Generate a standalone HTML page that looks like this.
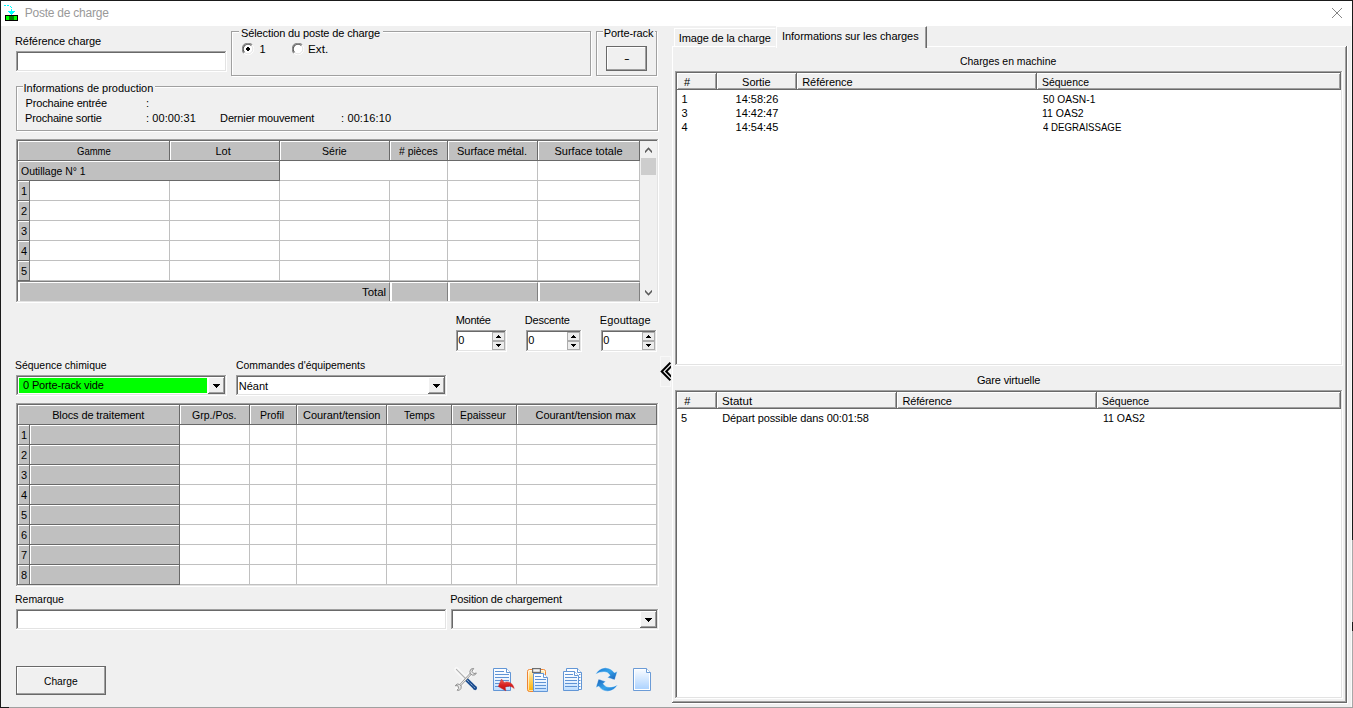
<!DOCTYPE html>
<html lang="fr"><head><meta charset="utf-8"><title>Poste de charge</title>
<style>
*{box-sizing:border-box;margin:0;padding:0}
html,body{width:1353px;height:708px;overflow:hidden;background:#f0f0f0}
body{position:relative;font:11px/13px "Liberation Sans",sans-serif;color:#000}
.a{position:absolute}
.t{position:absolute;white-space:pre;font:11px/13px "Liberation Sans",sans-serif}
.sunk{position:absolute;background:#fff;box-shadow:inset -1px -1px 0 #fff,inset 1px 1px 0 #a0a0a0,inset -2px -2px 0 #e3e3e3,inset 2px 2px 0 #696969}
.gb{position:absolute;border:1px solid #a0a0a0;box-shadow:1px 1px 0 #fff,inset 1px 1px 0 #fff}
.cov{position:absolute;background:#f0f0f0}
.btn{position:absolute;background:#f0f0f0;box-shadow:inset -1px -1px 0 #696969,inset 1px 1px 0 #fff,inset -2px -2px 0 #a0a0a0}
.pb{position:absolute;background:#f0f0f0;box-shadow:inset 0 0 0 1px #696969,inset -2px -2px 0 #a0a0a0,inset 2px 2px 0 #fff}
.fb{position:absolute;border:1px solid #adadad;background:#ececec}
.hc{position:absolute;background:#c0c0c0;box-shadow:inset -1px -1px 0 #696969,inset 1px 1px 0 #fff}
.dc{position:absolute;background:#fff;border-right:1px solid #c0c0c0;border-bottom:1px solid #c0c0c0}
.lh{position:absolute;background:#f0f0f0;box-shadow:inset -1px -1px 0 #696969,inset 1px 1px 0 #fff,inset -2px -2px 0 #a0a0a0}
</style></head>
<body>
<div class="a" style="left:0px;top:0px;width:1353px;height:26px;background:#fff"></div>
<div class="a" style="left:0px;top:0px;width:1353px;height:1px;background:#1a1a1a"></div>
<div class="a" style="left:0px;top:0px;width:1px;height:708px;background:#1a1a1a"></div>
<div class="a" style="left:1352px;top:0px;width:1px;height:540px;background:#1a1a1a"></div>
<div class="a" style="left:1352px;top:540px;width:1px;height:168px;background:#a8a8a8"></div>
<div class="a" style="left:1352px;top:622px;width:1px;height:9px;background:#1a1a1a"></div>
<div class="a" style="left:1351px;top:26px;width:1px;height:681px;background:#fafafa"></div>
<div class="a" style="left:0px;top:707px;width:1353px;height:1px;background:#a0a0a0"></div>
<div class="a" style="left:0px;top:707px;width:9px;height:1px;background:#1a1a1a"></div>
<svg class="a" style="left:0;top:0" width="24" height="24" viewBox="0 0 24 24" shape-rendering="crispEdges">
<path d="M4 5h2v1h-2zM7 5h2v1h-2zM10 6h1v1h-1zM11 7h1v1h-1zM11 9h1v2h-1zM8 11h7v1h-7zM9 12h5v1h-5zM10 13h3v1h-3zM11 14h1v1h-1z" fill="#00ffff"/>
<rect x="5" y="15" width="13" height="6" fill="#000"/>
<rect x="6" y="16" width="11" height="4" fill="#00ff00"/>
<rect x="9" y="16" width="5" height="4" fill="#008000"/>
</svg>

<div class="t" style="top:6px;left:24.70px;letter-spacing:-0.229px;font-size:12px;line-height:15px;color:#999;">Poste de charge</div>
<svg class="a" style="left:1331px;top:7px" width="12" height="12" viewBox="0 0 12 12"><path d="M1 1l10 10M11 1L1 11" stroke="#858585" stroke-width="1" fill="none"/></svg>
<div class="t" style="top:35px;left:15.00px;letter-spacing:-0.087px;">Référence charge</div>
<div class="sunk" style="left:16px;top:51px;width:211px;height:21px;"></div>
<div class="gb" style="left:231px;top:31px;width:360px;height:45px;"></div>
<div class="cov" style="left:239px;top:31px;width:144px;height:2px;"></div>
<div class="t" style="top:27px;left:241.05px;letter-spacing:-0.124px;">Sélection du poste de charge</div>
<svg class="a" style="left:242px;top:43px" width="12" height="12" viewBox="0 0 12 12">
<circle cx="6" cy="6" r="5.5" fill="#fff"/>
<path d="M1.9 10.1A5.5 5.5 0 0 1 10.1 1.9" stroke="#8c8c8c" stroke-width="1.1" fill="none"/>
<path d="M2.6 9.4A4.5 4.5 0 0 1 9.4 2.6" stroke="#5a5a5a" stroke-width="1.1" fill="none"/>
<path d="M10.1 1.9A5.5 5.5 0 0 1 1.9 10.1" stroke="#fff" stroke-width="1" fill="none"/>
<path d="M9.4 2.6A4.5 4.5 0 0 1 2.6 9.4" stroke="#e3e3e3" stroke-width="1" fill="none"/>
<path d="M5 4h2v1h1v2h-1v1h-2v-1h-1v-2h1z" fill="#000"/></svg>
<div class="t" style="top:43px;left:259.40px;">1</div>
<svg class="a" style="left:292px;top:43px" width="12" height="12" viewBox="0 0 12 12">
<circle cx="6" cy="6" r="5.5" fill="#fff"/>
<path d="M1.9 10.1A5.5 5.5 0 0 1 10.1 1.9" stroke="#8c8c8c" stroke-width="1.1" fill="none"/>
<path d="M2.6 9.4A4.5 4.5 0 0 1 9.4 2.6" stroke="#5a5a5a" stroke-width="1.1" fill="none"/>
<path d="M10.1 1.9A5.5 5.5 0 0 1 1.9 10.1" stroke="#fff" stroke-width="1" fill="none"/>
<path d="M9.4 2.6A4.5 4.5 0 0 1 2.6 9.4" stroke="#e3e3e3" stroke-width="1" fill="none"/>
</svg>
<div class="t" style="top:43px;left:307.89px;transform:scaleX(1.0647);transform-origin:0 0;">Ext.</div>
<div class="gb" style="left:596px;top:31px;width:61px;height:45px;"></div>
<div class="cov" style="left:603px;top:31px;width:52px;height:2px;"></div>
<div class="t" style="top:27px;left:603.75px;letter-spacing:-0.117px;">Porte-rack</div>
<div class="pb" style="left:606px;top:46px;width:41px;height:25px;"></div>
<div class="t" style="left:624.3px;top:52px;transform:scaleX(1.55);transform-origin:0 0">-</div>
<div class="gb" style="left:16px;top:86px;width:642px;height:45px;"></div>
<div class="cov" style="left:23px;top:86px;width:132px;height:2px;"></div>
<div class="t" style="top:82px;left:23.50px;letter-spacing:-0.016px;">Informations de production</div>
<div class="t" style="top:97px;left:25.60px;letter-spacing:-0.153px;">Prochaine entrée</div>
<div class="t" style="left:146px;top:97px;">:</div>
<div class="t" style="top:112px;left:25.10px;letter-spacing:-0.187px;">Prochaine sortie</div>
<div class="t" style="top:112px;left:145.90px;letter-spacing:0.111px;">: 00:00:31</div>
<div class="t" style="top:112px;left:220.10px;letter-spacing:-0.150px;">Dernier mouvement</div>
<div class="t" style="top:112px;left:341.05px;letter-spacing:0.117px;">: 00:16:10</div>
<div class="sunk" style="left:16px;top:139px;width:643px;height:164px;"></div>
<div class="hc" style="left:18px;top:141px;width:152px;height:20px;"></div>
<div class="t" style="top:145px;left:76.85px;transform:scaleX(0.8641);transform-origin:0 0;">Gamme</div>
<div class="hc" style="left:170px;top:141px;width:110px;height:20px;"></div>
<div class="t" style="top:145px;left:215.45px;letter-spacing:0.025px;">Lot</div>
<div class="hc" style="left:280px;top:141px;width:110px;height:20px;"></div>
<div class="t" style="top:145px;left:321.99px;transform:scaleX(0.9583);transform-origin:0 0;">Série</div>
<div class="hc" style="left:390px;top:141px;width:58px;height:20px;"></div>
<div class="t" style="top:145px;left:398.95px;transform:scaleX(0.9463);transform-origin:0 0;"># pièces</div>
<div class="hc" style="left:448px;top:141px;width:90px;height:20px;"></div>
<div class="t" style="top:145px;left:457.10px;letter-spacing:-0.077px;">Surface métal.</div>
<div class="hc" style="left:538px;top:141px;width:102px;height:20px;"></div>
<div class="t" style="top:145px;left:554.40px;letter-spacing:0.023px;">Surface totale</div>
<div class="hc" style="left:18px;top:161px;width:262px;height:20px;"></div>
<div class="t" style="top:165px;left:21.25px;transform:scaleX(0.9515);transform-origin:0 0;">Outillage N° 1</div>
<div class="dc" style="left:280px;top:161px;width:168px;height:20px;"></div>
<div class="dc" style="left:448px;top:161px;width:90px;height:20px;"></div>
<div class="dc" style="left:538px;top:161px;width:102px;height:20px;"></div>
<div class="hc" style="left:18px;top:181px;width:12px;height:20px;"></div>
<div class="t" style="left:21px;top:185px;">1</div>
<div class="dc" style="left:30px;top:181px;width:140px;height:20px;"></div>
<div class="dc" style="left:170px;top:181px;width:110px;height:20px;"></div>
<div class="dc" style="left:280px;top:181px;width:110px;height:20px;"></div>
<div class="dc" style="left:390px;top:181px;width:58px;height:20px;"></div>
<div class="dc" style="left:448px;top:181px;width:90px;height:20px;"></div>
<div class="dc" style="left:538px;top:181px;width:102px;height:20px;"></div>
<div class="hc" style="left:18px;top:201px;width:12px;height:20px;"></div>
<div class="t" style="left:21px;top:205px;">2</div>
<div class="dc" style="left:30px;top:201px;width:140px;height:20px;"></div>
<div class="dc" style="left:170px;top:201px;width:110px;height:20px;"></div>
<div class="dc" style="left:280px;top:201px;width:110px;height:20px;"></div>
<div class="dc" style="left:390px;top:201px;width:58px;height:20px;"></div>
<div class="dc" style="left:448px;top:201px;width:90px;height:20px;"></div>
<div class="dc" style="left:538px;top:201px;width:102px;height:20px;"></div>
<div class="hc" style="left:18px;top:221px;width:12px;height:20px;"></div>
<div class="t" style="left:21px;top:225px;">3</div>
<div class="dc" style="left:30px;top:221px;width:140px;height:20px;"></div>
<div class="dc" style="left:170px;top:221px;width:110px;height:20px;"></div>
<div class="dc" style="left:280px;top:221px;width:110px;height:20px;"></div>
<div class="dc" style="left:390px;top:221px;width:58px;height:20px;"></div>
<div class="dc" style="left:448px;top:221px;width:90px;height:20px;"></div>
<div class="dc" style="left:538px;top:221px;width:102px;height:20px;"></div>
<div class="hc" style="left:18px;top:241px;width:12px;height:20px;"></div>
<div class="t" style="left:21px;top:245px;">4</div>
<div class="dc" style="left:30px;top:241px;width:140px;height:20px;"></div>
<div class="dc" style="left:170px;top:241px;width:110px;height:20px;"></div>
<div class="dc" style="left:280px;top:241px;width:110px;height:20px;"></div>
<div class="dc" style="left:390px;top:241px;width:58px;height:20px;"></div>
<div class="dc" style="left:448px;top:241px;width:90px;height:20px;"></div>
<div class="dc" style="left:538px;top:241px;width:102px;height:20px;"></div>
<div class="hc" style="left:18px;top:261px;width:12px;height:20px;"></div>
<div class="t" style="left:21px;top:265px;">5</div>
<div class="dc" style="left:30px;top:261px;width:140px;height:20px;"></div>
<div class="dc" style="left:170px;top:261px;width:110px;height:20px;"></div>
<div class="dc" style="left:280px;top:261px;width:110px;height:20px;"></div>
<div class="dc" style="left:390px;top:261px;width:58px;height:20px;"></div>
<div class="dc" style="left:448px;top:261px;width:90px;height:20px;"></div>
<div class="dc" style="left:538px;top:261px;width:102px;height:20px;"></div>
<div class="a" style="left:18px;top:281px;width:622px;height:1px;background:#808080"></div>
<div class="a" style="left:18px;top:282px;width:372px;height:19px;background:#c0c0c0;border-top:1px solid #fff;border-left:2px solid #fff;border-right:1px solid #808080"></div>
<div class="a" style="left:390px;top:282px;width:58px;height:19px;background:#c0c0c0;border-top:1px solid #fff;border-left:2px solid #fff;border-right:1px solid #808080"></div>
<div class="a" style="left:448px;top:282px;width:90px;height:19px;background:#c0c0c0;border-top:1px solid #fff;border-left:2px solid #fff;border-right:1px solid #808080"></div>
<div class="a" style="left:538px;top:282px;width:102px;height:19px;background:#c0c0c0;border-top:1px solid #fff;border-left:2px solid #fff;border-right:1px solid #808080"></div>
<div class="t" style="top:286px;left:362.25px;transform:scaleX(1.0391);transform-origin:0 0;">Total</div>
<div class="a" style="left:640px;top:141px;width:17px;height:160px;background:#f0f0f0"></div>
<div class="a" style="left:641px;top:158px;width:15px;height:17px;background:#cdcdcd"></div>
<svg class="a" style="left:640px;top:141px" width="17" height="160" viewBox="640 141 17 160"><path d="M645 153.2L648.5 149.4L652 153.2V151L648.5 147.2L645 151ZM645 289.8L648.5 293.6L652 289.8V292L648.5 295.8L645 292Z" fill="#5a5a5a"/></svg>
<div class="t" style="top:314px;left:455.70px;letter-spacing:-0.280px;">Montée</div>
<div class="sunk" style="left:456px;top:330px;width:51px;height:22px;"></div>
<div class="t" style="top:334px;left:458.25px;">0</div>
<div class="fb" style="left:492px;top:332px;width:13px;height:9px;"></div>
<div class="fb" style="left:492px;top:341px;width:13px;height:9px;"></div>
<div class="a" style="left:498px;top:335px;width:1px;height:1px;background:#000"></div><div class="a" style="left:497px;top:336px;width:3px;height:1px;background:#000"></div><div class="a" style="left:496px;top:337px;width:5px;height:1px;background:#000"></div>
<div class="a" style="left:496px;top:344px;width:5px;height:1px;background:#000"></div><div class="a" style="left:497px;top:345px;width:3px;height:1px;background:#000"></div><div class="a" style="left:498px;top:346px;width:1px;height:1px;background:#000"></div>
<div class="t" style="top:314px;left:524.80px;letter-spacing:-0.186px;">Descente</div>
<div class="sunk" style="left:526px;top:330px;width:56px;height:22px;"></div>
<div class="t" style="top:334px;left:528.25px;">0</div>
<div class="fb" style="left:567px;top:332px;width:13px;height:9px;"></div>
<div class="fb" style="left:567px;top:341px;width:13px;height:9px;"></div>
<div class="a" style="left:573px;top:335px;width:1px;height:1px;background:#000"></div><div class="a" style="left:572px;top:336px;width:3px;height:1px;background:#000"></div><div class="a" style="left:571px;top:337px;width:5px;height:1px;background:#000"></div>
<div class="a" style="left:571px;top:344px;width:5px;height:1px;background:#000"></div><div class="a" style="left:572px;top:345px;width:3px;height:1px;background:#000"></div><div class="a" style="left:573px;top:346px;width:1px;height:1px;background:#000"></div>
<div class="t" style="top:314px;left:599.80px;letter-spacing:0.087px;">Egouttage</div>
<div class="sunk" style="left:601px;top:330px;width:56px;height:22px;"></div>
<div class="t" style="top:334px;left:603.25px;">0</div>
<div class="fb" style="left:642px;top:332px;width:13px;height:9px;"></div>
<div class="fb" style="left:642px;top:341px;width:13px;height:9px;"></div>
<div class="a" style="left:648px;top:335px;width:1px;height:1px;background:#000"></div><div class="a" style="left:647px;top:336px;width:3px;height:1px;background:#000"></div><div class="a" style="left:646px;top:337px;width:5px;height:1px;background:#000"></div>
<div class="a" style="left:646px;top:344px;width:5px;height:1px;background:#000"></div><div class="a" style="left:647px;top:345px;width:3px;height:1px;background:#000"></div><div class="a" style="left:648px;top:346px;width:1px;height:1px;background:#000"></div>
<div class="t" style="top:359px;left:15.00px;transform:scaleX(0.9474);transform-origin:0 0;">Séquence chimique</div>
<div class="sunk" style="left:16px;top:375px;width:211px;height:21px;"></div>
<div class="a" style="left:19px;top:378px;width:188px;height:15px;background:#00ff00"></div>
<div class="btn" style="left:208px;top:377px;width:17px;height:17px;"></div>
<div class="a" style="left:213px;top:384px;width:7px;height:1px;background:#000"></div><div class="a" style="left:214px;top:385px;width:5px;height:1px;background:#000"></div><div class="a" style="left:215px;top:386px;width:3px;height:1px;background:#000"></div><div class="a" style="left:216px;top:387px;width:1px;height:1px;background:#000"></div>
<div class="t" style="top:379px;left:23.00px;letter-spacing:-0.144px;">0 Porte-rack vide</div>
<div class="t" style="top:359px;left:236.25px;transform:scaleX(0.9456);transform-origin:0 0;">Commandes d'équipements</div>
<div class="sunk" style="left:236px;top:375px;width:211px;height:21px;"></div>
<div class="btn" style="left:428px;top:377px;width:17px;height:17px;"></div>
<div class="a" style="left:433px;top:384px;width:7px;height:1px;background:#000"></div><div class="a" style="left:434px;top:385px;width:5px;height:1px;background:#000"></div><div class="a" style="left:435px;top:386px;width:3px;height:1px;background:#000"></div><div class="a" style="left:436px;top:387px;width:1px;height:1px;background:#000"></div>
<div class="t" style="top:380px;left:238.80px;letter-spacing:-0.025px;">Néant</div>
<div class="sunk" style="left:16px;top:403px;width:643px;height:184px;"></div>
<div class="hc" style="left:18px;top:405px;width:162px;height:20px;"></div>
<div class="t" style="top:409px;left:52.15px;letter-spacing:-0.114px;">Blocs de traitement</div>
<div class="hc" style="left:180px;top:405px;width:70px;height:20px;"></div>
<div class="t" style="top:409px;left:192.05px;transform:scaleX(0.9587);transform-origin:0 0;">Grp./Pos.</div>
<div class="hc" style="left:250px;top:405px;width:47px;height:20px;"></div>
<div class="t" style="top:409px;left:259.79px;transform:scaleX(0.9625);transform-origin:0 0;">Profil</div>
<div class="hc" style="left:297px;top:405px;width:90px;height:20px;"></div>
<div class="t" style="top:409px;left:303.00px;letter-spacing:-0.021px;">Courant/tension</div>
<div class="hc" style="left:387px;top:405px;width:65px;height:20px;"></div>
<div class="t" style="top:409px;left:403.65px;transform:scaleX(0.9469);transform-origin:0 0;">Temps</div>
<div class="hc" style="left:452px;top:405px;width:65px;height:20px;"></div>
<div class="t" style="top:409px;left:459.71px;transform:scaleX(0.9396);transform-origin:0 0;">Epaisseur</div>
<div class="hc" style="left:517px;top:405px;width:140px;height:20px;"></div>
<div class="t" style="top:409px;left:535.50px;letter-spacing:-0.067px;">Courant/tension max</div>
<div class="hc" style="left:18px;top:425px;width:12px;height:20px;"></div>
<div class="t" style="left:21px;top:429px;">1</div>
<div class="hc" style="left:30px;top:425px;width:150px;height:20px;"></div>
<div class="dc" style="left:180px;top:425px;width:70px;height:20px;"></div>
<div class="dc" style="left:250px;top:425px;width:47px;height:20px;"></div>
<div class="dc" style="left:297px;top:425px;width:90px;height:20px;"></div>
<div class="dc" style="left:387px;top:425px;width:65px;height:20px;"></div>
<div class="dc" style="left:452px;top:425px;width:65px;height:20px;"></div>
<div class="dc" style="left:517px;top:425px;width:140px;height:20px;"></div>
<div class="hc" style="left:18px;top:445px;width:12px;height:20px;"></div>
<div class="t" style="left:21px;top:449px;">2</div>
<div class="hc" style="left:30px;top:445px;width:150px;height:20px;"></div>
<div class="dc" style="left:180px;top:445px;width:70px;height:20px;"></div>
<div class="dc" style="left:250px;top:445px;width:47px;height:20px;"></div>
<div class="dc" style="left:297px;top:445px;width:90px;height:20px;"></div>
<div class="dc" style="left:387px;top:445px;width:65px;height:20px;"></div>
<div class="dc" style="left:452px;top:445px;width:65px;height:20px;"></div>
<div class="dc" style="left:517px;top:445px;width:140px;height:20px;"></div>
<div class="hc" style="left:18px;top:465px;width:12px;height:20px;"></div>
<div class="t" style="left:21px;top:469px;">3</div>
<div class="hc" style="left:30px;top:465px;width:150px;height:20px;"></div>
<div class="dc" style="left:180px;top:465px;width:70px;height:20px;"></div>
<div class="dc" style="left:250px;top:465px;width:47px;height:20px;"></div>
<div class="dc" style="left:297px;top:465px;width:90px;height:20px;"></div>
<div class="dc" style="left:387px;top:465px;width:65px;height:20px;"></div>
<div class="dc" style="left:452px;top:465px;width:65px;height:20px;"></div>
<div class="dc" style="left:517px;top:465px;width:140px;height:20px;"></div>
<div class="hc" style="left:18px;top:485px;width:12px;height:20px;"></div>
<div class="t" style="left:21px;top:489px;">4</div>
<div class="hc" style="left:30px;top:485px;width:150px;height:20px;"></div>
<div class="dc" style="left:180px;top:485px;width:70px;height:20px;"></div>
<div class="dc" style="left:250px;top:485px;width:47px;height:20px;"></div>
<div class="dc" style="left:297px;top:485px;width:90px;height:20px;"></div>
<div class="dc" style="left:387px;top:485px;width:65px;height:20px;"></div>
<div class="dc" style="left:452px;top:485px;width:65px;height:20px;"></div>
<div class="dc" style="left:517px;top:485px;width:140px;height:20px;"></div>
<div class="hc" style="left:18px;top:505px;width:12px;height:20px;"></div>
<div class="t" style="left:21px;top:509px;">5</div>
<div class="hc" style="left:30px;top:505px;width:150px;height:20px;"></div>
<div class="dc" style="left:180px;top:505px;width:70px;height:20px;"></div>
<div class="dc" style="left:250px;top:505px;width:47px;height:20px;"></div>
<div class="dc" style="left:297px;top:505px;width:90px;height:20px;"></div>
<div class="dc" style="left:387px;top:505px;width:65px;height:20px;"></div>
<div class="dc" style="left:452px;top:505px;width:65px;height:20px;"></div>
<div class="dc" style="left:517px;top:505px;width:140px;height:20px;"></div>
<div class="hc" style="left:18px;top:525px;width:12px;height:20px;"></div>
<div class="t" style="left:21px;top:529px;">6</div>
<div class="hc" style="left:30px;top:525px;width:150px;height:20px;"></div>
<div class="dc" style="left:180px;top:525px;width:70px;height:20px;"></div>
<div class="dc" style="left:250px;top:525px;width:47px;height:20px;"></div>
<div class="dc" style="left:297px;top:525px;width:90px;height:20px;"></div>
<div class="dc" style="left:387px;top:525px;width:65px;height:20px;"></div>
<div class="dc" style="left:452px;top:525px;width:65px;height:20px;"></div>
<div class="dc" style="left:517px;top:525px;width:140px;height:20px;"></div>
<div class="hc" style="left:18px;top:545px;width:12px;height:20px;"></div>
<div class="t" style="left:21px;top:549px;">7</div>
<div class="hc" style="left:30px;top:545px;width:150px;height:20px;"></div>
<div class="dc" style="left:180px;top:545px;width:70px;height:20px;"></div>
<div class="dc" style="left:250px;top:545px;width:47px;height:20px;"></div>
<div class="dc" style="left:297px;top:545px;width:90px;height:20px;"></div>
<div class="dc" style="left:387px;top:545px;width:65px;height:20px;"></div>
<div class="dc" style="left:452px;top:545px;width:65px;height:20px;"></div>
<div class="dc" style="left:517px;top:545px;width:140px;height:20px;"></div>
<div class="hc" style="left:18px;top:565px;width:12px;height:20px;"></div>
<div class="t" style="left:21px;top:569px;">8</div>
<div class="hc" style="left:30px;top:565px;width:150px;height:20px;"></div>
<div class="dc" style="left:180px;top:565px;width:70px;height:20px;"></div>
<div class="dc" style="left:250px;top:565px;width:47px;height:20px;"></div>
<div class="dc" style="left:297px;top:565px;width:90px;height:20px;"></div>
<div class="dc" style="left:387px;top:565px;width:65px;height:20px;"></div>
<div class="dc" style="left:452px;top:565px;width:65px;height:20px;"></div>
<div class="dc" style="left:517px;top:565px;width:140px;height:20px;"></div>
<div class="t" style="top:593px;left:15.10px;transform:scaleX(0.9520);transform-origin:0 0;">Remarque</div>
<div class="sunk" style="left:16px;top:609px;width:431px;height:21px;"></div>
<div class="t" style="top:593px;left:450.20px;letter-spacing:-0.176px;">Position de chargement</div>
<div class="sunk" style="left:451px;top:609px;width:208px;height:21px;"></div>
<div class="btn" style="left:640px;top:611px;width:17px;height:17px;"></div>
<div class="a" style="left:645px;top:618px;width:7px;height:1px;background:#000"></div><div class="a" style="left:646px;top:619px;width:5px;height:1px;background:#000"></div><div class="a" style="left:647px;top:620px;width:3px;height:1px;background:#000"></div><div class="a" style="left:648px;top:621px;width:1px;height:1px;background:#000"></div>
<div class="pb" style="left:16px;top:666px;width:90px;height:29px;"></div>
<div class="t" style="top:675px;left:44.05px;transform:scaleX(0.9306);transform-origin:0 0;">Charge</div>
<svg class="a" style="left:448px;top:662px" width="212" height="36" viewBox="448 662 212 36">
<defs>
<linearGradient id="gp" x1="0" y1="0" x2="0" y2="1"><stop offset="0" stop-color="#ffffff"/><stop offset="0.45" stop-color="#eef6ff"/><stop offset="1" stop-color="#b9dbff"/></linearGradient>
<linearGradient id="gn" x1="0" y1="0" x2="0" y2="1"><stop offset="0" stop-color="#f6faff"/><stop offset="1" stop-color="#add3ff"/></linearGradient>
<linearGradient id="gc" x1="0" y1="0" x2="0" y2="1"><stop offset="0" stop-color="#fff3cf"/><stop offset="0.35" stop-color="#ffd876"/><stop offset="1" stop-color="#ffb000"/></linearGradient>
<linearGradient id="gr" x1="0" y1="0" x2="0" y2="1"><stop offset="0" stop-color="#f06a60"/><stop offset="0.5" stop-color="#d82222"/><stop offset="1" stop-color="#c01010"/></linearGradient>
<linearGradient id="gb" x1="0" y1="0" x2="1" y2="1"><stop offset="0" stop-color="#1a73d0"/><stop offset="0.45" stop-color="#36a3ea"/><stop offset="1" stop-color="#175fb8"/></linearGradient>
</defs>
<!-- 1: tools -->
<g fill="none" stroke-linecap="round">
<path d="M456.5 669.5L475 688M457.5 688.5L472.5 671.5" stroke="#fff" stroke-width="5" opacity=".5"/>
<path d="M456.4 669.4L465.5 678.5" stroke="#b0b0b0" stroke-width="1.1"/>
<path d="M466.3 679.3L475.2 688.2" stroke="#1d4f91" stroke-width="3.8" stroke-linecap="butt"/>
<path d="M474.8 687.8L475.2 688.2" stroke="#1d4f91" stroke-width="3.8"/>
<path d="M467 680L474.6 687.6" stroke="#e8f0ff" stroke-width="0.9" stroke-dasharray="0.9 1.1" stroke-linecap="butt"/>
<path d="M459.5 686L470.5 674" stroke="#9a9a9a" stroke-width="2.4"/>
<path d="M459.5 686L470.5 674" stroke="#f4f4f4" stroke-width="1"/>
<path d="M473.3 668.4a3.4 3.4 0 1 0 3.1 4.6l-2.6 .6l-1.6-2z" stroke="#909090" stroke-width="1" fill="#e8e8e8"/>
<path d="M455.4 685.4a3.2 3.2 0 1 1 1.6 4.8l1.7-1.8l-.8-2.4z" stroke="#909090" stroke-width="1" fill="#e8e8e8"/>
</g>
<!-- 2: document + red arrow -->
<path d="M493.5 668.5H506.5L510.5 672.5V690.5H493.5Z" fill="url(#gp)" stroke="#6296d6"/>
<path d="M506.5 668.5V672.5H510.5" fill="#fff" stroke="#6296d6"/>
<path d="M495 671.5H504M495 674.5H509M495 677.5H509M495 680.5H509M495 683.5H509M495 686.5H509" stroke="#5f93d4" fill="none"/>
<path d="M498.3 686.5L501.5 679L504.2 682.4C508.5 680.8 513 683 514.2 688.6C511.5 685.8 508 685.8 505.2 687.2L505.8 690.8Z" fill="url(#gr)" stroke="#c81818" stroke-width=".4"/>
<!-- 3: paste -->
<rect x="527.5" y="669.5" width="18" height="22" rx="2" fill="url(#gc)" stroke="#f08432"/>
<rect x="528.5" y="670.5" width="16" height="20" rx="1" fill="none" stroke="#fff" opacity=".6"/>
<rect x="532.6" y="668.6" width="7.8" height="3.8" fill="#f4f4f4" stroke="#6e6e6e" stroke-width="1.2"/>
<path d="M533.5 673.5H543.5L547.5 677.5V691.5H533.5Z" fill="url(#gp)" stroke="#6296d6"/>
<path d="M543.5 673.5V677.5H547.5" fill="#fff" stroke="#6296d6"/>
<path d="M535 676.5H541M535 679.5H546M535 682.5H546M535 685.5H546M535 688.5H546" stroke="#5f93d4" fill="none"/>
<!-- 4: copy -->
<path d="M566.5 668.5H577.5L581.5 672.5V689.5H566.5Z" fill="#fff" stroke="#6296d6"/>
<path d="M577.5 668.5V672.5H581.5" fill="#fff" stroke="#6296d6"/>
<path d="M579 674.5H580.5M579 677.5H580.5M579 680.5H580.5M579 683.5H580.5M579 686.5H580.5" stroke="#5f93d4" fill="none"/>
<path d="M563.5 671.5H574.5L578.5 675.5V690.5H563.5Z" fill="url(#gp)" stroke="#6296d6"/>
<path d="M574.5 671.5V675.5H578.5" fill="#fff" stroke="#6296d6"/>
<path d="M565 674.5H573M565 677.5H577M565 680.5H577M565 683.5H577M565 686.5H577" stroke="#5f93d4" fill="none"/>
<!-- 5: refresh -->
<path d="M595.3 674.6C598 670 601.6 667.7 605.6 667.8C609.6 667.9 612.4 669.8 614.2 672.6L617.4 671.6L614.7 680L607.2 677.4L610 675.4C608.6 673.2 606.8 672 604 672C600.8 672 598 672.8 595.3 674.6Z" fill="url(#gb)" stroke="#fff" stroke-width=".8" stroke-opacity=".6"/>
<g transform="rotate(180 606.6 679.5)"><path d="M595.3 674.6C598 670 601.6 667.7 605.6 667.8C609.6 667.9 612.4 669.8 614.2 672.6L617.4 671.6L614.7 680L607.2 677.4L610 675.4C608.6 673.2 606.8 672 604 672C600.8 672 598 672.8 595.3 674.6Z" fill="url(#gb)" stroke="#fff" stroke-width=".8" stroke-opacity=".6"/></g>
<!-- 6: new document -->
<path d="M633.5 668.5H646.5L650.5 672.5V690.5H633.5Z" fill="#fff" stroke="#6b9bd6"/>
<path d="M635 670H646L649 673V689H635Z" fill="url(#gn)"/>
<path d="M646.5 668.5V672.5H650.5" fill="#fff" stroke="#6b9bd6"/>
</svg>

<div class="a" style="left:660px;top:356px;width:11px;height:31px;border:1px solid #f8f8f8"></div>
<svg class="a" style="left:660px;top:357px;overflow:hidden" width="11" height="30" viewBox="0 0 11 30"><path d="M10.4 5.6L1.7 14.5L10.4 23.4M14.9 5.6L6.2 14.5L14.9 23.4" stroke="#000" stroke-width="2" fill="none"/></svg>
<div class="a" style="left:672px;top:46px;width:676px;height:658px;background:#fff"></div>
<div class="a" style="left:672px;top:46px;width:675px;height:657px;background:#f0f0f0;box-shadow:inset -1px -1px 0 #696969,inset 1px 1px 0 #fff,inset -2px -2px 0 #a0a0a0"></div>
<div class="a" style="left:674px;top:28px;width:102px;height:19px;border:1px solid;border-color:#fff #f0f0f0 #fff #fff;background:#f0f0f0"></div>
<div class="t" style="top:32px;left:678.70px;letter-spacing:-0.118px;">Image de la charge</div>
<div class="a" style="left:776px;top:26px;width:151px;height:22px;border:1px solid;border-color:#fff #696969 #f0f0f0 #fff;border-bottom:0;box-shadow:inset -1px 0 0 #a0a0a0;background:#f0f0f0"></div>
<div class="t" style="top:30px;left:782.05px;letter-spacing:-0.057px;">Informations sur les charges</div>
<div class="t" style="top:55px;left:959.95px;transform:scaleX(0.9485);transform-origin:0 0;">Charges en machine</div>
<div class="sunk" style="left:675px;top:71px;width:668px;height:295px;"></div>
<div class="lh" style="left:677px;top:73px;width:40px;height:17px;"></div>
<div class="t" style="top:76px;left:684.00px;">#</div>
<div class="lh" style="left:717px;top:73px;width:80px;height:17px;"></div>
<div class="t" style="top:76px;left:742.10px;letter-spacing:-0.040px;">Sortie</div>
<div class="lh" style="left:797px;top:73px;width:240px;height:17px;"></div>
<div class="t" style="top:76px;left:802.15px;letter-spacing:-0.031px;">Référence</div>
<div class="lh" style="left:1037px;top:73px;width:304px;height:17px;"></div>
<div class="t" style="top:76px;left:1042.10px;transform:scaleX(0.9479);transform-origin:0 0;">Séquence</div>
<div class="t" style="left:681.4px;top:93px;">1</div>
<div class="t" style="top:93px;left:735.60px;letter-spacing:-0.014px;">14:58:26</div>
<div class="t" style="top:93px;left:1042.95px;transform:scaleX(0.9304);transform-origin:0 0;">50 OASN-1</div>
<div class="t" style="left:681.4px;top:107px;">3</div>
<div class="t" style="top:107px;left:735.60px;letter-spacing:-0.014px;">14:42:47</div>
<div class="t" style="top:107px;left:1042.00px;transform:scaleX(0.9512);transform-origin:0 0;">11 OAS2</div>
<div class="t" style="left:681.4px;top:121px;">4</div>
<div class="t" style="top:121px;left:735.60px;letter-spacing:-0.014px;">14:54:45</div>
<div class="t" style="top:121px;left:1042.95px;transform:scaleX(0.8775);transform-origin:0 0;">4 DEGRAISSAGE</div>
<div class="t" style="top:374px;left:976.90px;letter-spacing:-0.154px;">Gare virtuelle</div>
<div class="sunk" style="left:675px;top:390px;width:668px;height:309px;"></div>
<div class="lh" style="left:677px;top:392px;width:40px;height:17px;"></div>
<div class="t" style="top:395px;left:684.20px;">#</div>
<div class="lh" style="left:717px;top:392px;width:180px;height:17px;"></div>
<div class="t" style="top:395px;left:721.80px;transform:scaleX(1.0464);transform-origin:0 0;">Statut</div>
<div class="lh" style="left:897px;top:392px;width:200px;height:17px;"></div>
<div class="t" style="top:395px;left:902.40px;letter-spacing:-0.163px;">Référence</div>
<div class="lh" style="left:1097px;top:392px;width:244px;height:17px;"></div>
<div class="t" style="top:395px;left:1101.90px;transform:scaleX(0.9521);transform-origin:0 0;">Séquence</div>
<div class="t" style="left:681px;top:412px;">5</div>
<div class="t" style="top:412px;left:722.20px;letter-spacing:-0.089px;">Départ possible dans 00:01:58</div>
<div class="t" style="top:412px;left:1102.69px;transform:scaleX(0.9558);transform-origin:0 0;">11 OAS2</div>
</body></html>
